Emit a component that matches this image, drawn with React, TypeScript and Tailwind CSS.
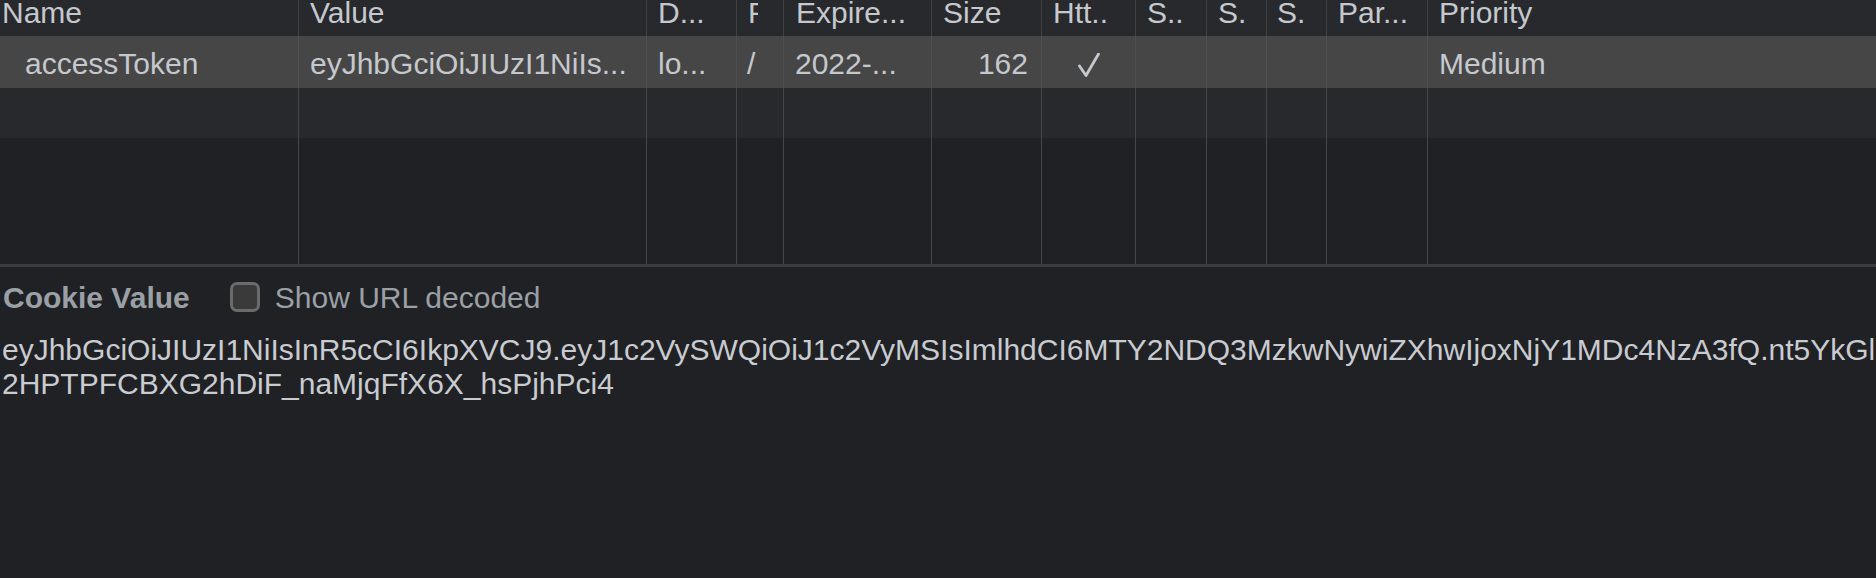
import React from "react";

interface Column {
  title: React.ReactNode;
  cell: React.ReactNode;
  head: string;
  body: string;
}

const TOKEN =
  "eyJhbGciOiJIUzI1NiIsInR5cCI6IkpXVCJ9.eyJ1c2VySWQiOiJ1c2VyMSIsImlhdCI6MTY2NDQ3MzkwNywiZXhwIjoxNjY1MDc4NzA3fQ.nt5YkGl2HPTPFCBXG2hDiF_naMjqFfX6X_hsPjhPci4";

const Check = () => (
  <svg width="22" height="24" viewBox="0 0 22 24" className="mx-auto mt-[17px]">
    <path d="M1.5 13 L8 22.5 L20.5 1" fill="none" stroke="#c5c8cd" strokeWidth="2.8" strokeLinecap="round" strokeLinejoin="round" />
  </svg>
);

const columns: Column[] = [
  { title: "Name", cell: "accessToken", head: "pl-[2px]", body: "pl-[25px]" },
  { title: "Value", cell: "eyJhbGciOiJIUzI1NiIs...", head: "pl-[11px]", body: "pl-[11px]" },
  { title: "D...", cell: "lo...", head: "pl-[11px]", body: "pl-[11px]" },
  {
    title: <span className="inline-block w-[10px] overflow-hidden align-top">P</span>,
    cell: "/",
    head: "pl-[11px]",
    body: "pl-[10px]",
  },
  { title: "Expire...", cell: "2022-...", head: "pl-[12px]", body: "pl-[11px]" },
  { title: "Size", cell: "162", head: "pl-[11px]", body: "pr-[13px] text-right" },
  { title: "Htt..", cell: <Check />, head: "pl-[11px]", body: "" },
  { title: "S..", cell: "", head: "pl-[11px]", body: "" },
  { title: "S.", cell: "", head: "pl-[11px]", body: "" },
  { title: "S.", cell: "", head: "pl-[10px]", body: "" },
  { title: "Par...", cell: "", head: "pl-[11px]", body: "" },
  { title: "Priority", cell: "Medium", head: "pl-[11px]", body: "pl-[11px]" },
];

const CookieTable = () => (
  <div className="grid h-[264px] grid-cols-[299px_348px_90px_47px_148px_110px_94px_71px_60px_60px_101px_1fr] grid-rows-[36px_52px_50px_1fr]">
    {columns.map((c, i) => (
      <div
        key={`h${i}`}
        className={`overflow-hidden whitespace-nowrap bg-[#28292d] leading-[26px] ${i < 11 ? "border-r border-[#404145]" : ""} ${c.head}`}
      >
        {c.title}
      </div>
    ))}
    {columns.map((c, i) => (
      <div
        key={`r${i}`}
        className={`overflow-hidden whitespace-nowrap bg-[#464646] leading-[56px] ${i < 11 ? "border-r border-[#505050]" : ""} ${c.body}`}
      >
        {c.cell}
      </div>
    ))}
    {columns.map((_, i) => (
      <div key={`s${i}`} className={`bg-[#28292d] ${i < 11 ? "border-r border-[#45464a]" : ""}`} />
    ))}
    {columns.map((_, i) => (
      <div key={`e${i}`} className={`bg-[#202124] ${i < 11 ? "border-r border-[#45464a]" : ""}`} />
    ))}
  </div>
);

export default function App() {
  return (
    <div className="h-[578px] w-[1876px] overflow-hidden bg-[#202124] font-['Liberation_Sans',Arial,sans-serif] text-[30px] text-[#c5c8cd]">
      <CookieTable />
      <div className="h-[3px] bg-[#3c3d41]" />

      <div className="flex h-[60px] items-center">
        <span className="pl-[3px] font-bold text-[#9aa0a6]">Cookie Value</span>
        <label className="ml-[40px] flex items-center">
          <span className="h-[30px] w-[30px] rounded-[7px] border-[3px] border-[#6b6b6b] bg-[#3a3a3a]" />
          <span className="ml-[15px] text-[#9aa0a6]">Show URL decoded</span>
        </label>
      </div>

      <div className="mt-[6px] w-[1882px] pl-[2px] leading-[34px] break-all text-[#c8cbd0]">{TOKEN}</div>
    </div>
  );
}
